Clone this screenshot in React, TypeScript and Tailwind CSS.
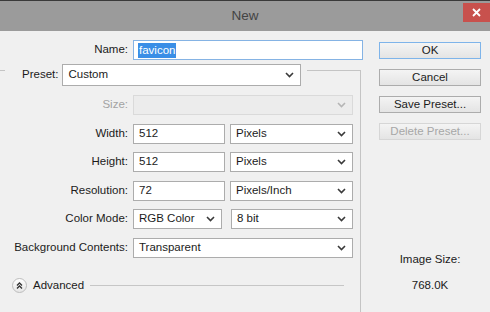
import React from "react";

const Chevron: React.FC<{ disabled?: boolean }> = ({ disabled }) => (
  <svg width="9" height="6" viewBox="0 0 9 6" className="shrink-0">
    <polyline
      points="1,1 4.5,4.5 8,1"
      fill="none"
      stroke={disabled ? "#b5b5b5" : "#3a3a3a"}
      strokeWidth="1.6"
    />
  </svg>
);

const Select: React.FC<{ value?: string; className?: string; disabled?: boolean }> = ({
  value,
  className = "",
  disabled,
}) => (
  <div
    className={
      "flex h-[20px] items-center justify-between border pl-[5px] pr-[6px] " +
      (disabled ? "border-[#dadada] bg-[#ececec]" : "border-[#acacac] bg-white") +
      " " +
      className
    }
  >
    <span>{value}</span>
    <Chevron disabled={disabled} />
  </div>
);

const Field: React.FC<{ value: string; className?: string }> = ({ value, className = "" }) => (
  <div className={"flex h-[20px] items-center border border-[#acacac] bg-white pl-[5px] " + className}>
    {value}
  </div>
);

const Row: React.FC<{ label: string; muted?: boolean; children: React.ReactNode }> = ({
  label,
  muted,
  children,
}) => (
  <div className="flex items-center">
    <label className={"w-[128px] shrink-0 pr-[5px] text-right " + (muted ? "text-[#a3a3a3]" : "")}>
      {label}
    </label>
    {children}
  </div>
);

const Button: React.FC<{ label: string; primary?: boolean; disabled?: boolean }> = ({
  label,
  primary,
  disabled,
}) => (
  <button
    className={
      "flex h-[17px] w-[102px] items-center justify-center border bg-gradient-to-b from-[#f4f4f4] to-[#e4e4e4] " +
      (primary
        ? "border-[#7eb4ea]"
        : disabled
          ? "border-[#d6d6d6] text-[#a7a7a7]"
          : "border-[#acacac]")
    }
  >
    {label}
  </button>
);

export default function App() {
  return (
    <div className="flex h-[312px] w-[490px] flex-col overflow-hidden bg-[#f0f0f0] font-['Liberation_Sans',Arial,sans-serif] text-[11.5px] text-[#1b1b1b]">
      {/* title bar */}
      <div className="grid h-[31px] shrink-0 grid-cols-[1fr_auto_1fr] border-t border-[#3a3a3a] bg-[#9b9b9b]">
        <div />
        <div className="self-center text-[13.5px] text-[#444]">New</div>
        <div className="flex justify-end">
          <div className="mt-[2px] flex h-[19px] w-[27px] items-center justify-center bg-[#c8514d]">
            <svg width="9" height="9" viewBox="0 0 9 9">
              <path d="M1 1L8 8M8 1L1 8" stroke="#fff" strokeWidth="1.8" />
            </svg>
          </div>
        </div>
      </div>

      <div className="flex flex-1">
        {/* form */}
        <div className="flex w-[370px] shrink-0 flex-col pt-[9px]">
          <div className="pl-[5px]">
            <Row label="Name:">
              <div className="flex h-[20px] w-[230px] items-center border border-[#85b3e4] bg-white pl-[4px]">
                <span className="bg-[#3a8ee6] px-[1px] leading-[15px] text-white">favicon</span>
              </div>
            </Row>
          </div>

          <fieldset className="-ml-[10px] -mt-[6px] w-[371px] border border-[#c4c4c4] pb-[40px] pl-[14px] pr-[7px] pt-0">
            <legend className="pl-[17px] pr-[6px] pt-[10px]">
              <div className="flex items-center gap-[4px]">
                <span>Preset:</span>
                <Select value="Custom" className="h-[22px] w-[239px]" />
              </div>
            </legend>

            <div className="mt-[9px] flex flex-col gap-[8.5px]">
              <Row label="Size:" muted>
                <Select disabled className="flex-1" />
              </Row>
              <Row label="Width:">
                <Field value="512" className="w-[92px]" />
                <Select value="Pixels" className="ml-[5px] flex-1" />
              </Row>
              <Row label="Height:">
                <Field value="512" className="w-[92px]" />
                <Select value="Pixels" className="ml-[5px] flex-1" />
              </Row>
              <Row label="Resolution:">
                <Field value="72" className="w-[92px]" />
                <Select value="Pixels/Inch" className="ml-[5px] flex-1" />
              </Row>
              <Row label="Color Mode:">
                <Select value="RGB Color" className="w-[89px]" />
                <Select value="8 bit" className="ml-[9px] flex-1" />
              </Row>
              <Row label="Background Contents:">
                <Select value="Transparent" className="flex-1" />
              </Row>
            </div>

            <div className="mt-[19px] flex items-center">
              <div className="ml-[7px] flex h-[15px] w-[15px] items-center justify-center rounded-full border border-[#bdbdbd] bg-gradient-to-b from-white to-[#e6e6e6]">
                <svg width="7" height="7" viewBox="0 0 7 7">
                  <polyline points="1,3.5 3.5,1 6,3.5" fill="none" stroke="#333" strokeWidth="1.3" />
                  <polyline points="1,6.5 3.5,4 6,6.5" fill="none" stroke="#333" strokeWidth="1.3" />
                </svg>
              </div>
              <span className="ml-[6px]">Advanced</span>
              <div className="ml-[6px] mr-[9px] h-px flex-1 bg-[#c6c6c6]" />
            </div>
          </fieldset>
        </div>

        {/* buttons */}
        <div className="ml-[9px] flex w-[102px] flex-col pt-[11px]">
          <div className="flex flex-col gap-[10px]">
            <Button label="OK" primary />
            <Button label="Cancel" />
            <Button label="Save Preset..." />
            <Button label="Delete Preset..." disabled />
          </div>
          <div className="mt-[112px] text-center leading-[14px]">Image Size:</div>
          <div className="mt-[12px] text-center leading-[14px]">768.0K</div>
        </div>
      </div>
    </div>
  );
}
